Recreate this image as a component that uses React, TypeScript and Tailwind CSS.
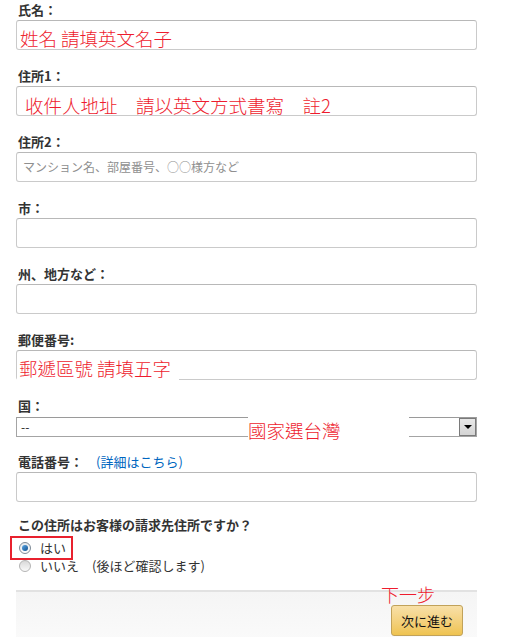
import React from 'react';

// Amazon.co.jp 住所入力フォーム (with red Chinese annotations)

const jp = { fontFamily: '"Noto Sans CJK JP", "Liberation Sans", sans-serif' };
const tc = { fontFamily: '"Noto Sans CJK TC", "Liberation Sans", sans-serif' };

function Label({ children, className = '' }: { children: React.ReactNode; className?: string }) {
  return <div className={`h-5 text-[13px] leading-5 font-bold text-[#333] pl-[2px] ${className}`}>{children}</div>;
}

function Box({ children, className = '' }: { children?: React.ReactNode; className?: string }) {
  return (
    <div
      className={`relative h-[30px] rounded-[3px] border border-[#cacaca] border-t-[#b8b8b8] bg-white flex items-center ${className}`}
    >
      {children}
    </div>
  );
}

function Note({ children, className = '' }: { children: React.ReactNode; className?: string }) {
  return (
    <span style={tc} className={`text-[18.5px] font-light leading-none text-[#ee1c2e] whitespace-pre ${className}`}>
      {children}
    </span>
  );
}

function Radio({ checked }: { checked?: boolean }) {
  return (
    <span
      className={`w-[12px] h-[12px] rounded-full border flex items-center justify-center ${
        checked ? 'border-[#7d8a96] bg-gradient-to-b from-[#e4e8ec] to-[#fdfdfd]' : 'border-[#b4b4b4] bg-gradient-to-b from-[#d9d9d9] to-[#fafafa]'
      }`}
    >
      {checked && <span className="w-[6px] h-[6px] rounded-full bg-gradient-to-br from-[#5aa8e6] to-[#0f4f8c]" />}
    </span>
  );
}

export default function App() {
  return (
    <div style={jp} className="w-[518px] h-[637px] bg-white overflow-hidden">
      <div className="ml-4 w-[461px]">
        {/* 氏名 */}
        <div className="mb-4">
          <Label>氏名：</Label>
          <Box className="pl-[3px] pt-[6px]">
            <Note>姓名 請填英文名子</Note>
          </Box>
        </div>

        {/* 住所1 */}
        <div className="mb-4">
          <Label>住所1：</Label>
          <Box className="pl-[8px] pt-[8px]">
            <Note>收件人地址　請以英文方式書寫　註2</Note>
          </Box>
        </div>

        {/* 住所2 */}
        <div className="mb-4">
          <Label>住所2：</Label>
          <Box className="pl-[6px]">
            <span className="text-[12px] text-[#8f8f8f]">マンション名、部屋番号、○○様方など</span>
          </Box>
        </div>

        {/* 市 */}
        <div className="mb-4">
          <Label>市：</Label>
          <Box />
        </div>

        {/* 州 */}
        <div className="mb-4">
          <Label>州、地方など：</Label>
          <Box />
        </div>

        {/* 郵便番号 */}
        <div className="mb-4">
          <Label>郵便番号:</Label>
          <Box>
            <span className="absolute left-0 bottom-[-3px] w-[162px] h-[24px] bg-white flex items-start pt-[1px] pl-[2px]">
              <Note>郵遞區號 請填五字</Note>
            </span>
          </Box>
        </div>

        {/* 国 */}
        <div className="mb-[15px]">
          <Label>国：</Label>
          <div className="relative mt-px h-5 border border-[#a4a4a4] border-t-[#9a9a9a] bg-white flex items-center">
            <span className="pl-[4px] text-[12px] text-[#222] leading-none">--</span>
            <span className="absolute right-0 top-0 bottom-0 w-[17px] border border-[#7a7a7a] bg-gradient-to-b from-[#e8e8e8] to-[#d4d4d4] flex items-center justify-center">
              <span className="w-0 h-0 border-l-[4px] border-r-[4px] border-t-[4px] border-l-transparent border-r-transparent border-t-black" />
            </span>
            <span className="absolute left-[231px] top-[-2px] w-[161px] h-[25px] bg-white flex items-center pt-[4px]">
              <Note>國家選台灣</Note>
            </span>
          </div>
        </div>

        {/* 電話番号 */}
        <div className="mb-[13px]">
          <Label>
            電話番号：
            <span className="ml-[13px] font-normal text-[13px] text-[#0066c0]">(詳細はこちら)</span>
          </Label>
          <Box />
        </div>

        {/* 請求先住所 */}
        <Label className="text-[13.4px]">この住所はお客様の請求先住所ですか？</Label>
        <div className="mt-[4px]">
          <div className="relative w-fit h-[18px] flex items-center gap-[9px] pl-[3px] text-[13px] text-[#333]">
            <Radio checked />
            <span>はい</span>
            <span className="absolute left-[-6px] top-[-3px] w-[63px] h-[24px] border-2 border-[#e8212e]" />
          </div>
          <div className="h-[18px] flex items-center gap-[9px] pl-[3px] text-[13px] text-[#333]">
            <Radio />
            <span>いいえ</span>
            <span className="ml-[4px]">(後ほど確認します)</span>
          </div>
        </div>

        {/* ボタンバー */}
        <div className="relative mt-[15px] h-[50px] border-t-2 border-[#e2e2e2] bg-gradient-to-b from-[#f5f5f5] to-[#fafafa] flex justify-end pr-[14px] pt-[13px]">
          <span className="absolute left-[365px] top-[-9px]">
            <Note className="text-[18px]">下一步</Note>
          </span>
          <button className="w-[72px] h-[31px] rounded-[3px] border border-[#c1a25a] bg-gradient-to-b from-[#f8e0a8] to-[#efc34f] text-[13px] text-[#111] leading-none">
            次に進む
          </button>
        </div>
      </div>
    </div>
  );
}
